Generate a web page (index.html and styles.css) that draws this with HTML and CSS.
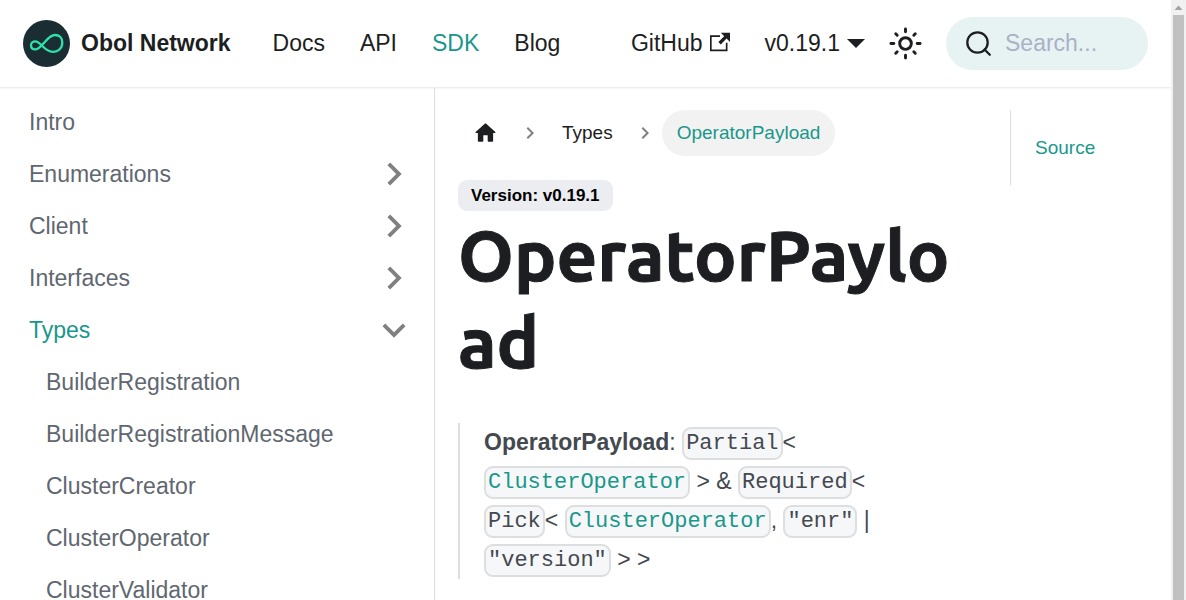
FILE: index.html
```html
<!DOCTYPE html>
<html lang="en">
<head>
<meta charset="utf-8">
<meta name="viewport" content="width=device-width, initial-scale=1">
<title>OperatorPayload | Obol Network</title>
<link rel="stylesheet" href="styles.css">
</head>
<body>
<svg class="sprite" aria-hidden="true">
  <symbol id="chevron-right" viewBox="0 0 24 24"><path d="M10 6L8.590 7.410 13.170 12l-4.580 4.590L10 18l6-6z"/></symbol>
  <symbol id="chevron-down" viewBox="0 0 24 24"><path d="M7.410 8.590L12 13.170l4.590-4.580L18 10l-6 6-6-6z"/></symbol>
</svg>
<div class="app">
  <div class="page">
    <header class="navbar">
      <a class="brand" href="#">
        <svg class="brand-logo" viewBox="0 0 47 47" aria-hidden="true">
          <circle cx="23.500" cy="23.500" r="23.500" fill="#1a2d33"/>
          <path d="M8 25.300C8 22.800 10 21.300 12.300 21.300C18 21.300 21 31.800 29.700 31.800C35.500 31.800 39.300 28 39.300 22.500C39.300 18 36.500 15 32 15C24 15 18.500 29.400 12.300 29.400C9.800 29.400 8 27.800 8 25.300Z" fill="none" stroke="#2fe0a8" stroke-width="2.300"/>
        </svg>
        <span>Obol Network</span>
      </a>
      <nav class="nav-main" aria-label="Main">
        <a href="#">Docs</a>
        <a href="#">API</a>
        <a class="active" href="#">SDK</a>
        <a href="#">Blog</a>
      </nav>
      <div class="nav-end">
        <a class="nav-github" href="#">GitHub
          <svg class="icon-external" viewBox="0 0 24 24" aria-hidden="true"><path d="M21 13v10h-21v-19h12v2h-10v15h17v-8h2zm3-12h-10.988l4.035 4-6.977 7.070 2.828 2.828 6.977-7.070 4.125 4.172v-11z"/></svg>
        </a>
        <button class="nav-version" type="button" aria-haspopup="true">v0.19.1
          <svg class="icon-caret" viewBox="0 0 18 9" aria-hidden="true"><path d="M0 0h18L9 9z"/></svg>
        </button>
        <button class="nav-theme" type="button" aria-label="Switch theme">
          <svg class="icon-sun" viewBox="0 0 24 24" aria-hidden="true">
            <circle cx="12" cy="12" r="4"/>
            <path d="M12 2v2M12 20v2M2 12h2M20 12h2M5.300 5.300l1 1M17.700 17.700l1 1M18.700 5.300l-1 1M6.300 17.700l-1 1"/>
          </svg>
        </button>
        <label class="search">
          <svg class="icon-search" viewBox="0 0 26 26" aria-hidden="true"><circle cx="11.500" cy="11.500" r="10.200"/><path d="M18.500 18.500l5.300 5.300"/></svg>
          <input class="search-input" type="search" placeholder="Search..." aria-label="Search">
        </label>
      </div>
    </header>
    <div class="layout">
      <aside class="sidebar">
        <ul class="menu">
          <li><a href="#">Intro</a></li>
          <li><a href="#">Enumerations <svg class="icon-menu" aria-hidden="true"><use href="#chevron-right"/></svg></a></li>
          <li><a href="#">Client <svg class="icon-menu" aria-hidden="true"><use href="#chevron-right"/></svg></a></li>
          <li><a href="#">Interfaces <svg class="icon-menu" aria-hidden="true"><use href="#chevron-right"/></svg></a></li>
          <li>
            <a class="active" href="#">Types <svg class="icon-menu" aria-hidden="true"><use href="#chevron-down"/></svg></a>
            <ul class="submenu">
              <li><a href="#">BuilderRegistration</a></li>
              <li><a href="#">BuilderRegistrationMessage</a></li>
              <li><a href="#">ClusterCreator</a></li>
              <li><a href="#">ClusterOperator</a></li>
              <li><a href="#">ClusterValidator</a></li>
            </ul>
          </li>
        </ul>
      </aside>
      <main class="main">
        <article class="doc">
          <nav aria-label="Breadcrumbs">
            <ul class="breadcrumbs">
              <li><a class="crumb" href="#" aria-label="Home page"><svg class="icon-home" viewBox="1 1 22 22" aria-hidden="true"><path d="M10 19v-5h4v5c0 .55.45 1 1 1h3c.55 0 1-.45 1-1v-7h1.700c.46 0 .68-.57.33-.87L12.670 3.600c-.38-.34-.96-.34-1.340 0l-8.360 7.530c-.34.3-.13.87.33.87H5v7c0 .55.45 1 1 1h3c.55 0 1-.45 1-1z"/></svg></a></li>
              <li><svg class="icon-crumb" aria-hidden="true"><use href="#chevron-right"/></svg><a class="crumb" href="#">Types</a></li>
              <li><svg class="icon-crumb" aria-hidden="true"><use href="#chevron-right"/></svg><span class="crumb crumb-current">OperatorPayload</span></li>
            </ul>
          </nav>
          <span class="badge">Version: v0.19.1</span>
          <h1 class="title">OperatorPayload</h1>
          <blockquote class="signature"><strong>OperatorPayload</strong>: <code>Partial</code>&lt; <a href="#"><code>ClusterOperator</code></a> &gt; &amp; <code>Required</code>&lt; <code>Pick</code>&lt; <a href="#"><code>ClusterOperator</code></a>, <code>"enr"</code> | <code>"version"</code> &gt; &gt;</blockquote>
        </article>
        <div class="toc-column">
          <nav class="toc" aria-label="On this page"><a href="#">Source</a></nav>
        </div>
      </main>
    </div>
  </div>
  <div class="scrollbar" aria-hidden="true">
    <svg class="scroll-arrow" viewBox="0 0 15 15"><path d="M7.500 5.500L11.500 10h-8z"/></svg>
    <div class="scroll-thumb"></div>
  </div>
</div>
</body>
</html>
```
FILE: styles.css
```css
:root {
  --primary: #1a978c;
  --text: #1c1e21;
  --muted: #606770;
  --border: #dadde1;
}

* { box-sizing: border-box; }

body {
  margin: 0;
  color: var(--text);
  background: #fff;
  font: 23px/39px "Liberation Sans", Arial, sans-serif;
}

a { color: inherit; text-decoration: none; }
ul { list-style: none; margin: 0; padding: 0; }

button {
  padding: 0;
  border: 0;
  background: none;
  color: inherit;
  font: inherit;
  cursor: pointer;
}

svg { display: block; flex: none; fill: currentColor; }
.sprite { position: absolute; width: 0; height: 0; }

.app {
  display: grid;
  grid-template-columns: minmax(0, 1fr) 15px;
  height: 100vh;
  overflow: hidden;
}

.page {
  display: flex;
  flex-direction: column;
  min-height: 0;
}

/* Navbar */
.navbar {
  display: flex;
  align-items: center;
  flex: none;
  height: 87px;
  padding: 0 23px;
  box-shadow: 0 1px 2px rgba(0, 0, 0, 0.1);
}

.brand {
  display: flex;
  align-items: center;
  gap: 11px;
  font-weight: bold;
}

.brand-logo { width: 47px; height: 47px; }

.nav-main {
  display: flex;
  gap: 35px;
  margin-left: 42px;
}

.active, .toc a { color: var(--primary); }

.nav-end {
  display: flex;
  align-items: center;
  margin-left: auto;
}

.nav-github, .nav-version {
  display: flex;
  align-items: center;
  gap: 7px;
}

.nav-version { margin-left: 35px; }
.nav-theme { margin: 0 23px; }
.icon-external { width: 20px; height: 20px; margin-bottom: 4px; }
.icon-caret { width: 18px; height: 9px; }

.icon-sun {
  width: 35px;
  height: 35px;
  fill: none;
  stroke: var(--text);
  stroke-width: 2;
  stroke-linecap: round;
}

.search {
  display: flex;
  align-items: center;
  gap: 13px;
  width: 202px;
  height: 53px;
  padding: 0 20px;
  border-radius: 27px;
  background: #e7f3f3;
}

.icon-search {
  width: 26px;
  height: 26px;
  fill: none;
  stroke: var(--text);
  stroke-width: 2.3;
  stroke-linecap: round;
}

.search-input {
  flex: 1;
  min-width: 0;
  padding: 0;
  border: 0;
  outline: 0;
  background: none;
  color: inherit;
  font: inherit;
}

.search-input::placeholder { color: #a9b1c7; opacity: 1; }

/* Sidebar */
.layout {
  display: flex;
  flex: 1;
  min-height: 0;
}

.sidebar {
  flex: none;
  width: 435px;
  padding: 9px 17px 0 12px;
  overflow: hidden;
  border-right: 1px solid var(--border);
  color: var(--muted);
}

.menu a {
  display: flex;
  align-items: center;
  justify-content: space-between;
  height: 52px;
  padding-left: 17px;
}

.submenu { padding-left: 17px; }
.icon-menu { width: 46px; height: 46px; fill: #808080; }

/* Document */
.main {
  display: flex;
  flex: 1;
  min-width: 0;
  overflow: hidden;
}

.doc {
  flex: 0 0 75%;
  min-width: 0;
  padding: 23px;
}

.breadcrumbs {
  display: flex;
  align-items: center;
  margin-bottom: 24px;
  font-size: 19px;
  line-height: 24px;
}

.breadcrumbs li { display: flex; align-items: center; }

.crumb {
  display: block;
  padding: 11px 15px;
  border-radius: 23px;
}

.crumb-current { background: #f2f2f2; color: var(--primary); }
.icon-home { width: 25px; height: 24px; }
.icon-crumb { width: 24px; height: 24px; margin: 0 5px; fill: #808080; }

.badge {
  display: block;
  width: fit-content;
  padding: 0 13px;
  border-radius: 9px;
  background: #ebedf0;
  color: #000;
  font-size: 17px;
  font-weight: bold;
  line-height: 31px;
}

.title {
  margin: 0 0 38px;
  font: 700 71px/87px Ubuntu, "Noto Sans", sans-serif;
  -webkit-text-stroke: 1px var(--text);
  overflow-wrap: anywhere;
}

.signature {
  margin: 0;
  padding: 0 24px;
  border-left: 2px solid var(--border);
  color: #444950;
}

.signature a { color: var(--primary); }

.signature code {
  padding: 2px;
  border: 2px solid #dcdee0;
  border-radius: 9px;
  background: #f6f7f8;
  font: 22px "Liberation Mono", monospace;
  vertical-align: middle;
}

.toc-column { flex: 1; min-width: 0; padding: 23px; }

.toc {
  padding: 18px 24px;
  border-left: 1px solid var(--border);
  font-size: 19px;
}

/* Scroll track */
.scrollbar {
  display: flex;
  flex-direction: column;
  align-items: center;
  background: #f1f1f1;
}

.scroll-arrow { width: 15px; height: 15px; fill: #a3a3a3; }
.scroll-thumb { flex: 1; width: 11px; background: #c1c1c1; }
```
